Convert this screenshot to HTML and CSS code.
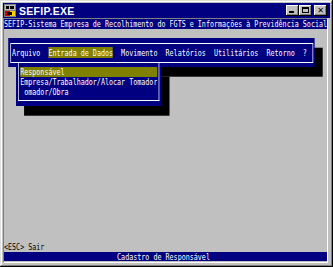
FILE: index.html
```html
<!DOCTYPE html>
<html lang="pt-BR">
<head>
  <meta charset="UTF-8">
  <meta name="viewport" content="width=device-width, initial-scale=1.0">
  <title>SEFIP.EXE</title>
  <link rel="stylesheet" href="styles.css">
</head>
<body>
  <div class="window">
    <div class="titlebar">
      <svg class="app-icon" width="12" height="13" viewBox="0 0 12 13">
        <rect width="12" height="13" fill="#808080"/>
        <rect x="1" y="1" width="10" height="5" fill="#c0c0c0"/>
        <rect x="2" y="2" width="3" height="3" fill="#000"/>
        <rect x="6" y="2" width="4" height="3" fill="#000"/>
        <rect x="1" y="7" width="5" height="5" fill="#d00000"/>
        <rect x="6" y="7" width="5" height="5" fill="#f8d000"/>
        <rect x="3" y="8" width="5" height="3" fill="#000"/>
      </svg>
      <span class="title">SEFIP.EXE</span>
      <div class="caption-buttons">
        <span class="cap-btn cap-min"><i></i></span>
        <span class="cap-btn cap-max"><i></i></span>
        <span class="cap-btn cap-close">&#x2715;</span>
      </div>
    </div>

    <div class="client">
      <div class="screen">
        <div class="row header">SEFIP-Sistema Empresa de Recolhimento do FGTS e Informações à Previdência Social</div>

        <div class="desktop">
          <div class="menubar">
            <div class="frame"></div>
            <div class="menu-items">Arquivo  <span class="hl">Entrada de Dados</span>  Movimento  Relatórios  Utilitários  Retorno  ?</div>
          </div>

          <div class="dropdown">
            <div class="frame"></div>
            <div class="drop-item hl">Responsável</div>
            <div class="drop-item">Empresa/Trabalhador/Alocar Tomador</div>
            <div class="drop-item"> omador/Obra</div>
          </div>
        </div>

        <div class="row status">&lt;ESC&gt; Sair</div>
        <div class="row footer">Cadastro de Responsável</div>
      </div>
    </div>
  </div>
</body>
</html>
```

FILE: styles.css
```css
body {
  margin: 0;
  background-color: #c0c0c0;
}
.window {
  width: 333px;
  height: 267px;
  box-sizing: border-box;
  padding: 3px;
  background-color: #c0c0c0;
  box-shadow: inset -1px -1px #000, inset 1px 1px #dfdfdf, inset -2px -2px #808080, inset 2px 2px #fff;
  overflow: hidden;
}
.titlebar {
  height: 15px;
  background-color: #000080;
  display: flex;
  align-items: center;
  padding: 0 3px 0 1px;
}
.app-icon {
  flex: none;
  margin-right: 3px;
}
.title {
  font-family: "Liberation Sans", Arial, sans-serif;
  font-weight: bold;
  font-size: 10.5px;
  letter-spacing: 0.3px;
  color: #fff;
}
.caption-buttons {
  margin-left: auto;
  display: flex;
}
.cap-btn {
  width: 13px;
  height: 11px;
  box-sizing: border-box;
  background-color: #c0c0c0;
  box-shadow: inset -1px -1px #000, inset 1px 1px #fff, inset -2px -2px #808080;
  position: relative;
  font-family: "DejaVu Sans", sans-serif;
  font-size: 8px;
  font-weight: bold;
  line-height: 11px;
  text-align: center;
  color: #000;
}
.cap-close {
  margin-left: 2px;
}
.cap-min i {
  position: absolute;
  left: 3px;
  bottom: 3px;
  width: 5px;
  height: 2px;
  background-color: #000;
}
.cap-max i {
  position: absolute;
  left: 3px;
  top: 2px;
  width: 7px;
  height: 6px;
  box-sizing: border-box;
  border: 1px solid #000;
  border-top-width: 2px;
}

/* DOS text screen: 80 columns x 25 rows */
.client {
  width: 323px;
  height: 243px;
  border: 1px solid;
  border-color: #808080 #fff #fff #808080;
  overflow: hidden;
}
.screen {
  width: 80ch;
  font-family: "DejaVu Sans Mono", monospace;
  font-size: 9.5px;
  line-height: 9.7px;
  transform: scaleX(0.706);
  transform-origin: 0 0;
  background-color: #c0c0c0;
}
.row {
  height: 9.7px;
  overflow: hidden;
  white-space: pre;
}
.header {
  background-color: #000080;
  color: #fff;
}
.desktop {
  height: 213.4px;
  position: relative;
}
.menubar {
  position: relative;
  top: 9.7px;
  margin-left: 1ch;
  width: 76ch;
  height: 29.1px;
  background-color: #000080;
  box-shadow: 2ch 9.7px 0 #000;
  color: #fff;
}
.frame {
  position: absolute;
  top: 4.85px;
  bottom: 4.85px;
  left: 0.5ch;
  right: 0.5ch;
  border: 1px solid #fff;
  border-left-width: 1.4px;
  border-right-width: 1.4px;
}
.menu-items {
  position: relative;
  padding: 9.7px 0 0 1ch;
  white-space: pre;
}
.hl {
  background-color: #808000;
  color: #fff;
}
.dropdown {
  position: absolute;
  top: 38.8px;
  left: 3ch;
  width: 36ch;
  height: 38.8px;
  background-color: #000080;
  box-shadow: 2ch 9.7px 0 #000;
  color: #fff;
}
.dropdown .frame {
  top: -4.85px;
  border-top: 0;
}
.drop-item {
  position: relative;
  margin-left: 1ch;
  width: 34ch;
  height: 9.7px;
  overflow: hidden;
  white-space: pre;
}
.status {
  color: #000;
}
.footer {
  background-color: #000080;
  color: #fff;
  padding-left: 28ch;
}
```
